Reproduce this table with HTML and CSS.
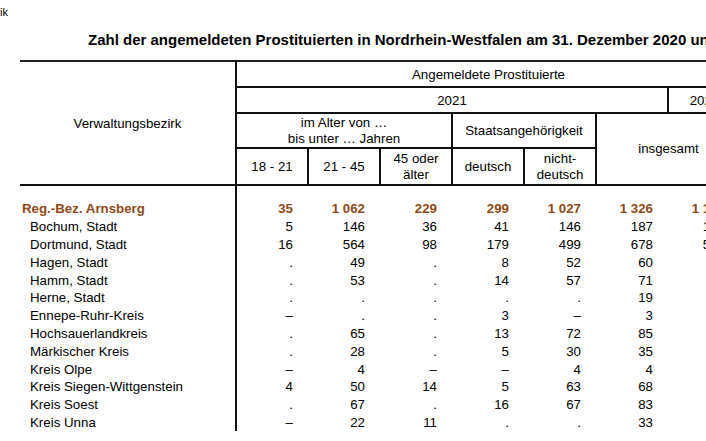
FILE: index.html
```html
<!DOCTYPE html>
<html lang="de">
<head>
<meta charset="utf-8">
<title>Angemeldete Prostituierte NRW</title>
<link rel="stylesheet" href="styles.css">
</head>
<body>
<div class="page">
  <div class="crumb">ik</div>
  <h1 class="title">Zahl der angemeldeten Prostituierten in Nordrhein-Westfalen am 31. Dezember 2020 und 2021</h1>
  <table class="tab">
    <colgroup>
      <col class="c-stub">
      <col class="c-num"><col class="c-num"><col class="c-num"><col class="c-num"><col class="c-num"><col class="c-num"><col class="c-num">
    </colgroup>
    <thead>
      <tr class="h1">
        <th class="stub" rowspan="4">Verwaltungsbezirk</th>
        <th class="bb" colspan="7">Angemeldete Prostituierte</th>
      </tr>
      <tr class="h2">
        <th class="bb br" colspan="6">2021</th>
        <th class="bb">2020</th>
      </tr>
      <tr class="h3">
        <th class="bb br two" colspan="3">im Alter von …<br>bis unter … Jahren</th>
        <th class="bb br" colspan="2">Staatsangehörigkeit</th>
        <th class="ins" colspan="2" rowspan="2">insgesamt</th>
      </tr>
      <tr class="h4">
        <th class="br">18 - 21</th>
        <th class="br">21 - 45</th>
        <th class="br two">45 oder<br>älter</th>
        <th class="br">deutsch</th>
        <th class="br two">nicht-<br>deutsch</th>
      </tr>
    </thead>
    <tbody>
      <tr class="spacer"><td class="name"></td><td colspan="7"></td></tr>
      <tr class="sum"><td class="name">Reg.-Bez. Arnsberg</td><td>35</td><td>1 062</td><td>229</td><td>299</td><td>1 027</td><td>1 326</td><td>1 159</td></tr>
      <tr><td class="name sub">Bochum, Stadt</td><td>5</td><td>146</td><td>36</td><td>41</td><td>146</td><td>187</td><td>176</td></tr>
      <tr><td class="name sub">Dortmund, Stadt</td><td>16</td><td>564</td><td>98</td><td>179</td><td>499</td><td>678</td><td>512</td></tr>
      <tr><td class="name sub">Hagen, Stadt</td><td>.</td><td>49</td><td>.</td><td>8</td><td>52</td><td>60</td><td></td></tr>
      <tr><td class="name sub">Hamm, Stadt</td><td>.</td><td>53</td><td>.</td><td>14</td><td>57</td><td>71</td><td></td></tr>
      <tr><td class="name sub">Herne, Stadt</td><td>.</td><td>.</td><td>.</td><td>.</td><td>.</td><td>19</td><td></td></tr>
      <tr><td class="name sub">Ennepe-Ruhr-Kreis</td><td>–</td><td>.</td><td>.</td><td>3</td><td>–</td><td>3</td><td></td></tr>
      <tr><td class="name sub">Hochsauerlandkreis</td><td>.</td><td>65</td><td>.</td><td>13</td><td>72</td><td>85</td><td></td></tr>
      <tr><td class="name sub">Märkischer Kreis</td><td>.</td><td>28</td><td>.</td><td>5</td><td>30</td><td>35</td><td></td></tr>
      <tr><td class="name sub">Kreis Olpe</td><td>–</td><td>4</td><td>–</td><td>–</td><td>4</td><td>4</td><td></td></tr>
      <tr><td class="name sub">Kreis Siegen-Wittgenstein</td><td>4</td><td>50</td><td>14</td><td>5</td><td>63</td><td>68</td><td></td></tr>
      <tr><td class="name sub">Kreis Soest</td><td>.</td><td>67</td><td>.</td><td>16</td><td>67</td><td>83</td><td></td></tr>
      <tr><td class="name sub">Kreis Unna</td><td>–</td><td>22</td><td>11</td><td>.</td><td>.</td><td>33</td><td></td></tr>
    </tbody>
  </table>
</div>
</body>
</html>
```
FILE: styles.css
```css
html, body {
  margin: 0;
  padding: 0;
  background: #fff;
}
body {
  width: 706px;
  height: 441px;
  overflow: hidden;
  font-family: "Liberation Sans", Arial, sans-serif;
  color: #000;
}
.page {
  width: 800px;
}
.crumb {
  font-size: 11px;
  line-height: 12px;
  padding-top: 6px;
  padding-left: 0;
  height: 12px;
}
.title {
  margin: 0;
  padding-left: 88px;
  font-size: 15px;
  font-weight: bold;
  line-height: 18px;
  height: 37px;
  padding-top: 13px;
  box-sizing: border-box;
  white-space: nowrap;
}
.tab {
  margin-left: 20px;
  margin-top: 5px;
  border-collapse: collapse;
  table-layout: fixed;
  width: 720px;
  font-size: 13.3px;
}
.c-stub { width: 216px; }
.c-num { width: 72px; }
thead {
  border-top: 2px solid #222;
  border-bottom: 2px solid #111;
}
th {
  font-weight: normal;
  padding: 0;
  text-align: center;
  vertical-align: middle;
  line-height: 15px;
}
th.stub {
  border-right: 2px solid #111;
  padding-bottom: 0;
}
.bb { border-bottom: 2px solid #111; }
.br { border-right: 2px solid #111; }
.h1 { height: 26px; }
.h2 { height: 26px; }
.h3 { height: 35px; }
.h4 { height: 37px; }
.two { line-height: 16px; }
th.ins { padding-bottom: 2px; }
td {
  padding: 0 15px 0 0;
  text-align: right;
  height: 17.8px;
  line-height: 15px;
  white-space: nowrap;
  vertical-align: middle;
}
td.name {
  text-align: left;
  padding: 0 0 0 10px;
  border-right: 2px solid #111;
}
td.name.sub {
  padding-left: 10px;
}
tr.sum td {
  font-weight: bold;
  color: #8e4a17;
}
tr.sum td.name {
  padding-left: 2px;
}
tr.spacer td {
  height: 14px;
}
```
